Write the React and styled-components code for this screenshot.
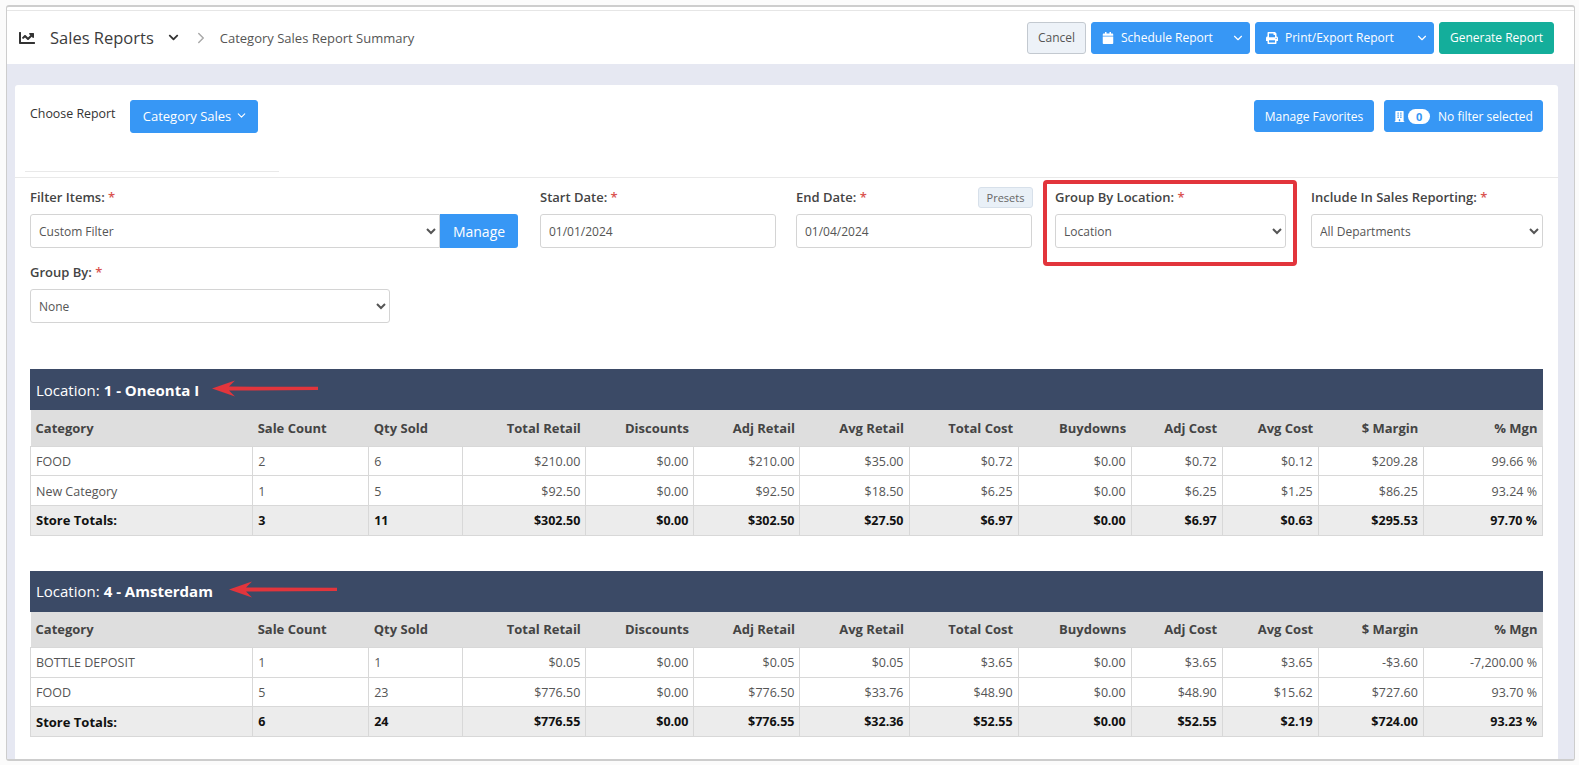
import React from 'react'
import styled, { createGlobalStyle } from 'styled-components'
import { FaChartLine, FaChevronDown, FaCalendar, FaPrint, FaBuilding } from 'react-icons/fa'
import { ChevronRight, ChevronDown } from 'lucide-react'

const BLUE = '#3797f5'

const GlobalStyle = createGlobalStyle`
  html, body { margin: 0; padding: 0; background: #fbfbfb; }
  body { font-family: "Open Sans", "Liberation Sans", sans-serif; color: #4a4a4a; font-size: 13px; overflow: hidden; }
  * { box-sizing: border-box; }
`

const Frame = styled.div`
  margin: 5px 4px 0 6px;
  height: 756px;
  border: 1px solid #cdcdcd;
  border-top-width: 2px;
  border-bottom-width: 2px;
  border-radius: 3px;
  background: #fff;
  padding-top: 3px;
  display: flex;
  flex-direction: column;
  overflow: hidden;
`

const TopBar = styled.header`
  height: 54px;
  flex: none;
  border-top: 1px solid #e6e6e6;
  display: flex;
  align-items: center;
  padding: 0 20px 0 12px;
`

const Title = styled.h1`
  font-size: 16.5px;
  font-weight: 400;
  margin: 0 0 0 15px;
  color: #3c3c3c;
`

const TitleCaret = styled(FaChevronDown)`
  font-size: 11px;
  margin-left: 14px;
  color: #333;
`

const Crumb = styled.span`
  margin-left: 10px;
  color: #555;
`

const Actions = styled.div`
  margin-left: auto;
  display: flex;
  gap: 5px;
`

const Button = styled.button`
  height: 32px;
  border: 1px solid ${p => p.$bg || BLUE};
  border-radius: 3px;
  background: ${p => p.$bg || BLUE};
  color: #fff;
  font: 400 12px "Open Sans", sans-serif;
  display: inline-flex;
  align-items: center;
  padding: 0;
  width: ${p => p.$w}px;
  justify-content: center;
  gap: 6px;
`

const CancelButton = styled(Button)`
  background: #edf2f8;
  border-color: #c3c9d0;
  color: #555;
`

const SplitLabel = styled.span`
  flex: 1;
  display: flex;
  align-items: center;
  gap: 7px;
  padding-left: 10px;
`

const SplitCaret = styled(ChevronDown)`
  margin-right: 4px;
`

const Content = styled.main`
  flex: 1;
  background: #e6e8f2;
  padding: 21px 16px 0 8px;
  display: flex;
  min-height: 0;
`

const Card = styled.section`
  flex: 1;
  background: #fff;
  border-radius: 3px 3px 0 0;
`

const ReportRow = styled.div`
  height: 71px;
  display: flex;
  align-items: flex-start;
  padding: 15px 15px 0 15px;
`

const ChooseLabel = styled.span`
  color: #333;
  font-size: 12.4px;
  margin-top: 5px;
`

const ReportSelect = styled(Button)`
  height: 33px;
  width: 128px;
  margin-left: 14px;
  padding: 0 0 2px 4px;
  font-size: 13px;
  gap: 4px;
`

const ReportActions = styled.div`
  margin-left: auto;
  display: flex;
  gap: 10px;
`

const Badge = styled.span`
  background: #fff;
  color: ${BLUE};
  font-size: 11px;
  font-weight: 700;
  border-radius: 9px;
  width: 22px;
  height: 15px;
  display: inline-flex;
  align-items: center;
  justify-content: center;
  margin-right: 2px;
  margin-left: -3px;
`

const TabsLine = styled.div`
  margin-left: 10px;
  width: 254px;
  height: 16px;
  border-bottom: 1px solid #e9e9e9;
`

const FormArea = styled.div`
  border-top: 1px solid #e9e9e9;
  margin-top: 5px;
  padding: 9px 15px 0;
`

const FormRow = styled.div`
  display: flex;
  height: 75px;
`

const Field = styled.div`
  position: relative;
  width: ${p => p.$w}px;
  margin-right: ${p => p.$gap || 0}px;
  flex: none;
`

const Label = styled.label`
  display: block;
  height: 27px;
  line-height: 21px;
  font-size: 13px;
  font-weight: 600;
  color: #444;
`

const Req = styled.span`
  color: #d9534f;
`

const InputRow = styled.div`
  display: flex;
`

const Select = styled.select`
  flex: 1;
  width: ${p => (p.$joined ? 'auto' : '100%')};
  min-width: 0;
  height: 34px;
  padding: 0 4px;
  border: 1px solid #d4d4d4;
  border-radius: ${p => (p.$joined ? '3px 0 0 3px' : '3px')};
  background: #fff;
  color: #555;
  font: 400 12px "Open Sans", sans-serif;
`

const Input = styled.input`
  width: 100%;
  height: 34px;
  padding: 0 8px;
  border: 1px solid #d4d4d4;
  border-radius: 3px;
  color: #555;
  font: 400 12px "Open Sans", sans-serif;
`

const ManageButton = styled.button`
  width: 78px;
  height: 34px;
  border: none;
  border-radius: 0 3px 3px 0;
  background: ${BLUE};
  color: #fff;
  font: 400 14px "Open Sans", sans-serif;
`

const PresetsButton = styled.button`
  position: absolute;
  top: 0;
  right: -1px;
  height: 21px;
  width: 55px;
  padding: 0;
  border: 1px solid #d7e0ea;
  border-radius: 3px;
  background: #e9f0f7;
  color: #666;
  font: 400 11px "Open Sans", sans-serif;
`

const RedBox = styled.div`
  position: absolute;
  top: -7px;
  left: -12px;
  right: -11px;
  height: 86px;
  border: 4px solid #e2353c;
  border-radius: 4px;
  pointer-events: none;
`

const Section = styled.div`
  margin: 0 15px 35px;
`

const Sections = styled.div`
  padding-top: 32px;
`

const SectionTitle = styled.div`
  height: 41px;
  background: #3b4a66;
  color: #fff;
  display: flex;
  align-items: center;
  padding-left: 6px;
  font-size: 15px;
  gap: 4px;
`

const Arrow = styled.svg`
  margin-left: ${p => p.$gap}px;
  margin-bottom: 3px;
  flex: none;
`

const Table = styled.table`
  width: 100%;
  table-layout: fixed;
  border-collapse: collapse;
  font-size: 12.5px;
`

const Th = styled.th`
  height: 36px;
  background: #dedede;
  color: #444;
  font-weight: 700;
  font-size: 13px;
  padding: 0 5px;
  text-align: ${p => (p.$right ? 'right' : 'left')};
`

const Td = styled.td`
  height: 29.7px;
  padding: ${p => (p.$total ? '0 5px' : '1px 5px 0')};
  border: 1px solid #d8d8d8;
  color: ${p => (p.$total ? '#111' : '#555')};
  font-weight: ${p => (p.$total ? 700 : 400)};
  background: ${p => (p.$total ? '#ececec' : '#fff')};
  text-align: ${p => (p.$right ? 'right' : 'left')};
`

const TotalLabel = styled(Td)`
  font-size: 13px;
`

const WIDTHS = [222, 116, 94, 123, 108, 106, 109, 109, 113, 91, 96, 105, 119]

const HEADERS = ['Category', 'Sale Count', 'Qty Sold', 'Total Retail', 'Discounts', 'Adj Retail', 'Avg Retail', 'Total Cost', 'Buydowns', 'Adj Cost', 'Avg Cost', '$ Margin', '% Mgn']

const LOCATIONS = [
  {
    prefix: 'Location:',
    name: '1 - Oneonta I',
    arrow: 106,
    arrowGap: 9,
    rows: [
      ['FOOD', '2', '6', '$210.00', '$0.00', '$210.00', '$35.00', '$0.72', '$0.00', '$0.72', '$0.12', '$209.28', '99.66 %'],
      ['New Category', '1', '5', '$92.50', '$0.00', '$92.50', '$18.50', '$6.25', '$0.00', '$6.25', '$1.25', '$86.25', '93.24 %'],
    ],
    totals: ['Store Totals:', '3', '11', '$302.50', '$0.00', '$302.50', '$27.50', '$6.97', '$0.00', '$6.97', '$0.63', '$295.53', '97.70 %'],
  },
  {
    prefix: 'Location:',
    name: '4 - Amsterdam',
    arrow: 108,
    arrowGap: 12,
    rows: [
      ['BOTTLE DEPOSIT', '1', '1', '$0.05', '$0.00', '$0.05', '$0.05', '$3.65', '$0.00', '$3.65', '$3.65', '-$3.60', '-7,200.00 %'],
      ['FOOD', '5', '23', '$776.50', '$0.00', '$776.50', '$33.76', '$48.90', '$0.00', '$48.90', '$15.62', '$727.60', '93.70 %'],
    ],
    totals: ['Store Totals:', '6', '24', '$776.55', '$0.00', '$776.55', '$32.36', '$52.55', '$0.00', '$52.55', '$2.19', '$724.00', '93.23 %'],
  },
]

const RedArrow = ({ width, gap }) => (
  <Arrow $gap={gap} width={width} height={17} viewBox={`0 0 ${width} 17`}>
    <path d={`M0 8.5 L23 0.5 L17 6.6 L${width} 6.8 L${width} 10 L17 10.6 L23 16.5 Z`} fill="#e2353c" />
  </Arrow>
)

const LocationTable = ({ loc }) => (
  <Section>
    <SectionTitle>
      <span>{loc.prefix}</span>
      <b>{loc.name}</b>
      <RedArrow width={loc.arrow} gap={loc.arrowGap} />
    </SectionTitle>
    <Table>
      <colgroup>
        {WIDTHS.map((w, i) => <col key={i} width={w} />)}
      </colgroup>
      <thead>
        <tr>
          {HEADERS.map((h, i) => <Th key={h} $right={i > 2}>{h}</Th>)}
        </tr>
      </thead>
      <tbody>
        {loc.rows.map(row => (
          <tr key={row[0]}>
            {row.map((c, i) => <Td key={i} $right={i > 2}>{c}</Td>)}
          </tr>
        ))}
        <tr>
          {loc.totals.map((c, i) => (
            i === 0
              ? <TotalLabel key={i} $total>{c}</TotalLabel>
              : <Td key={i} $total $right={i > 2}>{c}</Td>
          ))}
        </tr>
      </tbody>
    </Table>
  </Section>
)

export default function App() {
  return (
    <>
      <GlobalStyle />
      <Frame>
        <TopBar>
          <FaChartLine size={16} color="#333" />
          <Title>Sales Reports</Title>
          <TitleCaret />
          <ChevronRight size={18} color="#aaa" style={{ marginLeft: 13 }} />
          <Crumb>Category Sales Report Summary</Crumb>
          <Actions>
            <CancelButton $w={59}>Cancel</CancelButton>
            <Button $w={159}>
              <SplitLabel><FaCalendar size={12} />Schedule Report</SplitLabel>
              <SplitCaret size={14} />
            </Button>
            <Button $w={179}>
              <SplitLabel><FaPrint size={12} />Print/Export Report</SplitLabel>
              <SplitCaret size={14} />
            </Button>
            <Button $w={115} $bg="#14ae9b">Generate Report</Button>
          </Actions>
        </TopBar>
        <Content>
          <Card>
            <ReportRow>
              <ChooseLabel>Choose Report</ChooseLabel>
              <ReportSelect>Category Sales <ChevronDown size={13} /></ReportSelect>
              <ReportActions>
                <Button $w={120}>Manage Favorites</Button>
                <Button $w={159}><FaBuilding size={11} /><Badge>0</Badge>No filter selected</Button>
              </ReportActions>
            </ReportRow>
            <TabsLine />
            <FormArea>
              <FormRow>
                <Field $w={488} $gap={22}>
                  <Label>Filter Items: <Req>*</Req></Label>
                  <InputRow>
                    <Select $joined defaultValue="Custom Filter"><option>Custom Filter</option></Select>
                    <ManageButton>Manage</ManageButton>
                  </InputRow>
                </Field>
                <Field $w={236} $gap={20}>
                  <Label>Start Date: <Req>*</Req></Label>
                  <Input defaultValue="01/01/2024" />
                </Field>
                <Field $w={236} $gap={23}>
                  <Label>End Date: <Req>*</Req></Label>
                  <PresetsButton>Presets</PresetsButton>
                  <Input defaultValue="01/04/2024" />
                </Field>
                <Field $w={231} $gap={25}>
                  <Label>Group By Location: <Req>*</Req></Label>
                  <Select defaultValue="Location"><option>Location</option></Select>
                  <RedBox />
                </Field>
                <Field $w={232}>
                  <Label>Include In Sales Reporting: <Req>*</Req></Label>
                  <Select defaultValue="All Departments"><option>All Departments</option></Select>
                </Field>
              </FormRow>
              <FormRow>
                <Field $w={360}>
                  <Label>Group By: <Req>*</Req></Label>
                  <Select defaultValue="None"><option>None</option></Select>
                </Field>
              </FormRow>
            </FormArea>
            <Sections>
              {LOCATIONS.map(loc => <LocationTable key={loc.name} loc={loc} />)}
            </Sections>
          </Card>
        </Content>
      </Frame>
    </>
  )
}
